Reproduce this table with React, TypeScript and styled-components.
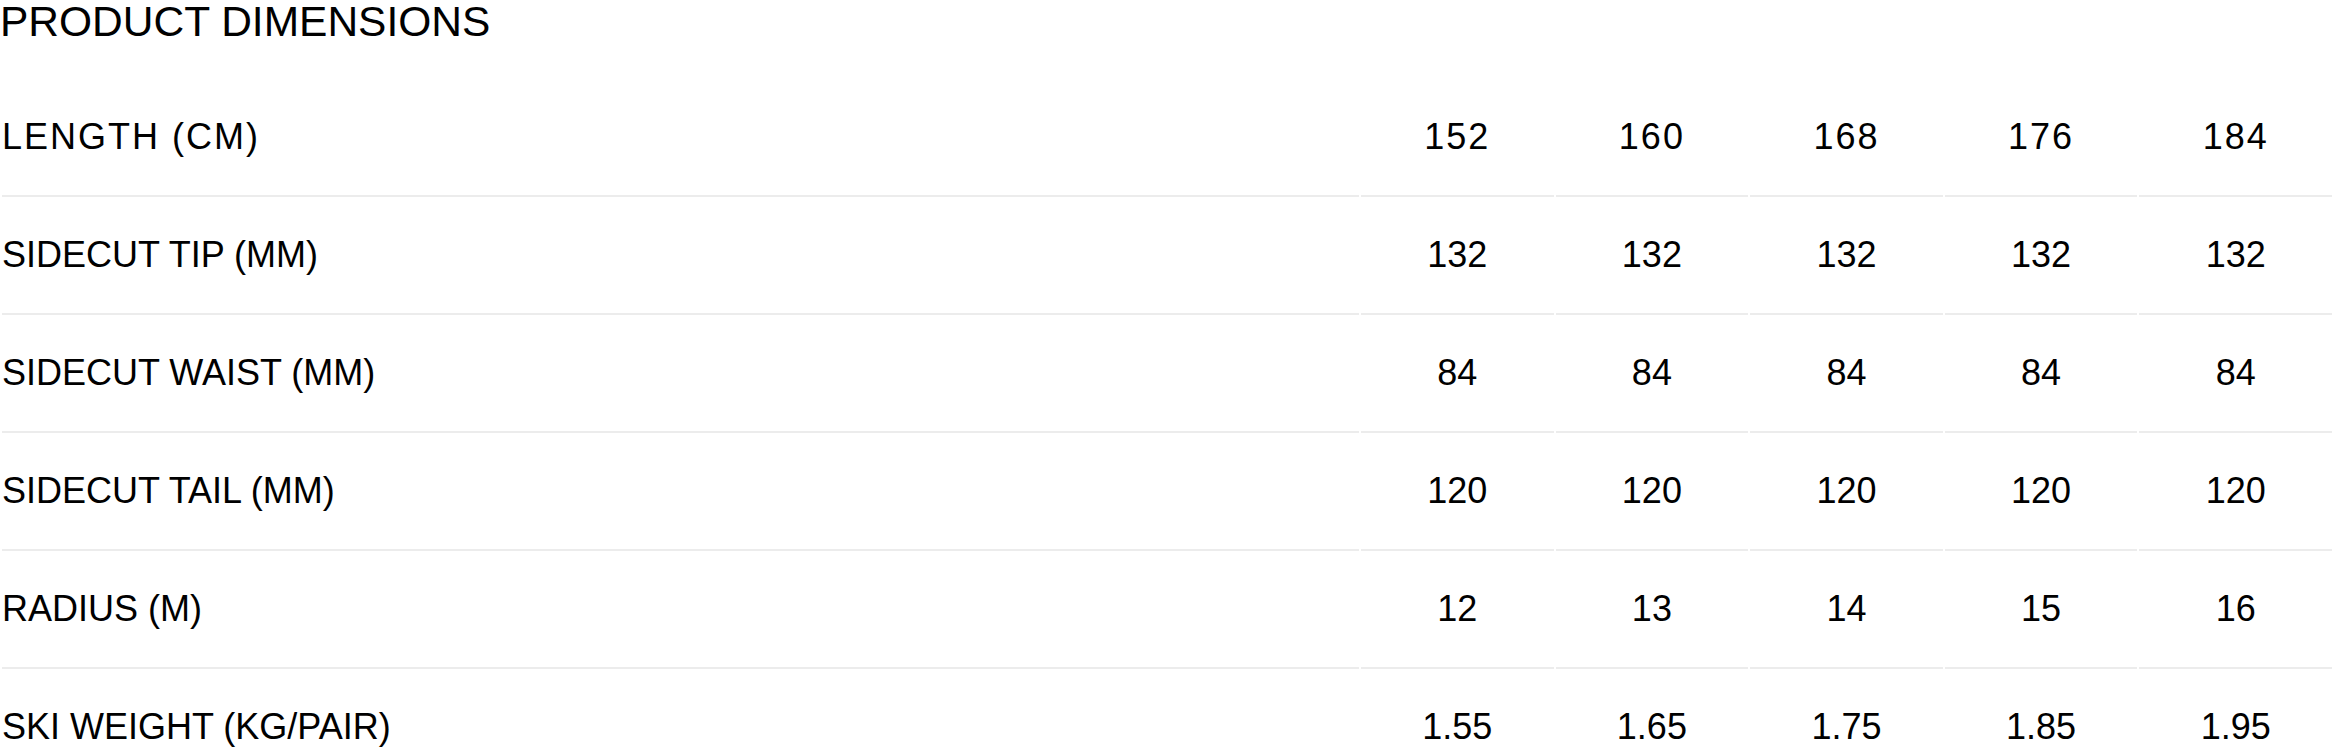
import styled, { createGlobalStyle } from 'styled-components';

type SpecRow = {
  label: string;
  values: string[];
};

const specs: SpecRow[] = [
  { label: 'LENGTH (CM)', values: ['152', '160', '168', '176', '184'] },
  { label: 'SIDECUT TIP (MM)', values: ['132', '132', '132', '132', '132'] },
  { label: 'SIDECUT WAIST (MM)', values: ['84', '84', '84', '84', '84'] },
  { label: 'SIDECUT TAIL (MM)', values: ['120', '120', '120', '120', '120'] },
  { label: 'RADIUS (M)', values: ['12', '13', '14', '15', '16'] },
  { label: 'SKI WEIGHT (KG/PAIR)', values: ['1.55', '1.65', '1.75', '1.85', '1.95'] },
];

const GlobalStyle = createGlobalStyle`
  body {
    margin: 0;
    background: #fff;
    color: #000;
    font-family: 'Liberation Sans', Arial, sans-serif;
  }
`;

const App = () => {
  return (
    <>
      <GlobalStyle />
      <Section>
        <Title>PRODUCT DIMENSIONS</Title>
        <Table>
          {specs.map((row, idx) => (
            <Row key={row.label} $head={idx === 0}>
              <LabelCell>{row.label}</LabelCell>
              {row.values.map((v, i) => (
                <ValueCell key={i}>{v}</ValueCell>
              ))}
            </Row>
          ))}
        </Table>
      </Section>
    </>
  );
};

const Section = styled.div`
  width: 2334px;
`;

const Title = styled.h2`
  margin: 0;
  padding-top: 1px;
  font-size: 42.5px;
  font-weight: 400;
  line-height: 1;
`;

const Table = styled.div`
  display: flex;
  flex-direction: column;
  gap: 2px;
  padding: 37px 2px 2px;
`;

const Row = styled.div<{ $head?: boolean }>`
  display: grid;
  grid-template-columns: 1357px repeat(5, 1fr);
  column-gap: 2px;
  letter-spacing: ${(p) => (p.$head ? '2px' : 'normal')};
`;

const Cell = styled.div`
  height: 116px;
  box-sizing: border-box;
  display: flex;
  align-items: center;
  border-bottom: 2px solid #ececec;
  font-size: 36px;
  line-height: 1;
  padding-bottom: 2px;
`;

const LabelCell = styled(Cell)`
  justify-content: flex-start;
`;

const ValueCell = styled(Cell)`
  justify-content: center;
`;

export default App;
